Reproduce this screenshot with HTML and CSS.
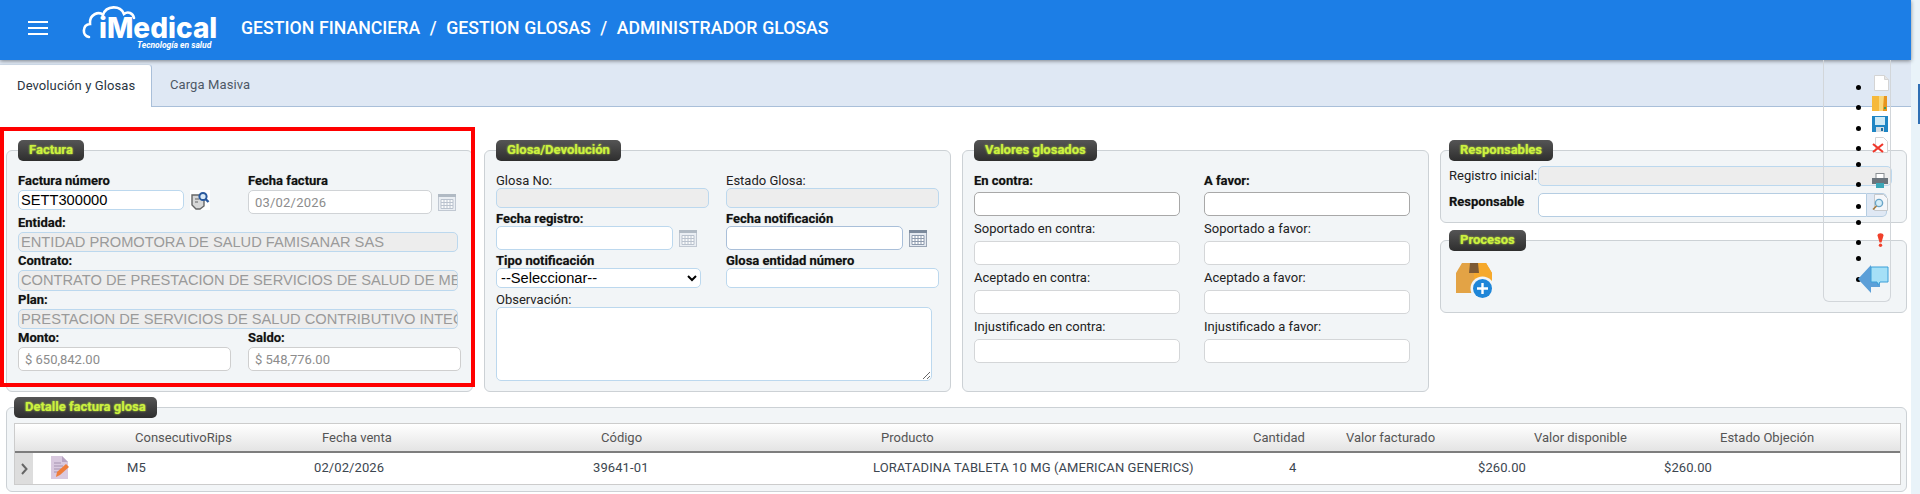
FILE: index.html
```html
<!DOCTYPE html>
<html lang="es">
<head>
<meta charset="utf-8">
<title>iMedical - Administrador Glosas</title>
<link rel="stylesheet" href="styles.css">
</head>
<body>
<svg class="defs" width="0" height="0" aria-hidden="true">
  <symbol id="cal" viewBox="0 0 18 17">
    <rect x="0.5" y="0.5" width="17" height="16" fill="#e4e9f0" stroke="#9aa5b5"/>
    <rect x="0" y="0" width="18" height="3" fill="#7c8a9c"/>
    <path d="M3 5.5h12v9H3zM3 8.5h12M3 11.5h12M6 5.5v9M9 5.5v9M12 5.5v9" fill="#fff" stroke="#8d9aad" stroke-width="1"/>
  </symbol>
</svg>
<div class="shell">
  <div class="main">
    <header class="topbar">
      <svg class="burger" width="20" height="14" viewBox="0 0 20 14"><path d="M0 1h20M0 7h20M0 13h20" stroke="#fff" stroke-width="2"/></svg>
      <svg class="logo" width="140" height="54" viewBox="0 0 140 54">
        <path d="M8 37C1 36 1 25 9 24C8 14 18 11 22 15C25 5 40 5 43 14C47 11 52 13 53 18" fill="none" stroke="#fff" stroke-width="2.6" stroke-linecap="round"/>
        <text x="18" y="38" class="logo-main">iMedical</text>
        <text x="56" y="48" class="logo-sub">Tecnología en salud</text>
      </svg>
      <h1 class="crumbs">GESTION FINANCIERA&nbsp; /&nbsp; GESTION GLOSAS&nbsp; /&nbsp; ADMINISTRADOR GLOSAS</h1>
    </header>
    <nav class="tabs">
      <a class="tab active">Devolución y Glosas</a>
      <a class="tab">Carga Masiva</a>
    </nav>
    <section class="columns">
      <div class="panel">
        <div class="legend">Factura</div>
        <div class="pair first">
          <div>
            <label class="lbl b">Factura número</label>
            <div class="with-icon">
              <div class="ctl num">SETT300000</div>
              <svg class="lookup" width="20" height="20" viewBox="0 0 20 20">
                <rect width="20" height="20" fill="#fff"/>
                <path d="M2 5h8l4 5v6l-4 3H6l-4-4z" fill="#d8d8d8" stroke="#666" stroke-width="1.4"/>
                <path d="M5 9h4M5 12h3" stroke="#666"/>
                <circle cx="13" cy="6.5" r="3.6" fill="#dcebf8" stroke="#2c5a9e" stroke-width="2"/>
                <path d="M15.5 9l3 3" stroke="#2c5a9e" stroke-width="2.4"/>
              </svg>
            </div>
          </div>
          <div>
            <label class="lbl b">Fecha factura</label>
            <div class="with-icon">
              <div class="ctl date muted">03/02/2026</div>
              <svg class="cal faded"><use href="#cal"/></svg>
            </div>
          </div>
        </div>
        <label class="lbl b">Entidad:</label>
        <div class="ctl ro wide h20">ENTIDAD PROMOTORA DE SALUD FAMISANAR SAS</div>
        <label class="lbl b">Contrato:</label>
        <div class="ctl ro wide h21">CONTRATO DE PRESTACION DE SERVICIOS DE SALUD DE MEDICAMENTOS</div>
        <label class="lbl b">Plan:</label>
        <div class="ctl ro wide h20">PRESTACION DE SERVICIOS DE SALUD CONTRIBUTIVO INTEGRAL</div>
        <div class="pair">
          <div>
            <label class="lbl b">Monto:</label>
            <div class="ctl money muted">$ 650,842.00</div>
          </div>
          <div>
            <label class="lbl b">Saldo:</label>
            <div class="ctl money muted">$ 548,776.00</div>
          </div>
        </div>
      </div>

      <div class="panel">
        <div class="legend">Glosa/Devolución</div>
        <div class="pair first-g">
          <div>
            <label class="lbl tight">Glosa No:</label>
            <input class="ctl ro box-213" disabled>
          </div>
          <div>
            <label class="lbl tight">Estado Glosa:</label>
            <input class="ctl ro box-213" disabled>
          </div>
        </div>
        <div class="pair gap">
          <div>
            <label class="lbl b tight">Fecha registro:</label>
            <div class="with-icon">
              <input class="ctl date2">
              <svg class="cal faded"><use href="#cal"/></svg>
            </div>
          </div>
          <div>
            <label class="lbl b tight">Fecha notificación</label>
            <div class="with-icon">
              <input class="ctl date2 strong">
              <svg class="cal"><use href="#cal"/></svg>
            </div>
          </div>
        </div>
        <div class="pair gap">
          <div>
            <label class="lbl b tight">Tipo notificación</label>
            <select class="ctl sel"><option>--Seleccionar--</option></select>
          </div>
          <div>
            <label class="lbl b tight">Glosa entidad número</label>
            <input class="ctl box-213">
          </div>
        </div>
        <label class="lbl tight obs">Observación:</label>
        <textarea class="ctl area"></textarea>
      </div>

      <div class="panel">
        <div class="legend">Valores glosados</div>
        <div class="values">
          <div><label class="lbl b v first-v">En contra:</label><input class="ctl val dark"></div>
          <div><label class="lbl b v first-v">A favor:</label><input class="ctl val dark"></div>
          <div><label class="lbl v">Soportado en contra:</label><input class="ctl val"></div>
          <div><label class="lbl v">Soportado a favor:</label><input class="ctl val"></div>
          <div><label class="lbl v">Aceptado en contra:</label><input class="ctl val"></div>
          <div><label class="lbl v">Aceptado a favor:</label><input class="ctl val"></div>
          <div><label class="lbl v">Injustificado en contra:</label><input class="ctl val"></div>
          <div><label class="lbl v">Injustificado a favor:</label><input class="ctl val"></div>
        </div>
      </div>

      <div class="stack">
        <div class="panel short">
          <div class="legend">Responsables</div>
          <div class="resp-row r1">
            <label class="lbl">Registro inicial:</label>
            <input class="ctl ro resp1" disabled>
          </div>
          <div class="resp-row r2">
            <label class="lbl b">Responsable</label>
            <input class="ctl resp2">
            <span class="addon"></span>
          </div>
        </div>
        <div class="panel short">
          <div class="legend">Procesos</div>
          <svg class="boxicon" width="37" height="37" viewBox="0 0 37 37">
            <path d="M0 11L6 1h24l6 10v20H0z" fill="#e3a345"/>
            <path d="M18 1h12l6 10v20H18z" fill="#f6a92c"/>
            <path d="M14 1h8l1 10H13z" fill="#7d5a34"/>
            <circle cx="26.5" cy="26.5" r="12" fill="#f2f5f7"/>
            <circle cx="26.5" cy="26.5" r="9.5" fill="#1f86d8"/>
            <path d="M26.5 21v11M21 26.5h11" stroke="#fff" stroke-width="2.4"/>
          </svg>
        </div>
      </div>
    </section>

    <section class="panel detail">
      <div class="legend">Detalle factura glosa</div>
      <div class="table">
        <div class="thead">
          <span class="first-h">ConsecutivoRips</span><span>Fecha venta</span><span>Código</span><span>Producto</span><span>Cantidad</span><span>Valor facturado</span><span>Valor disponible</span><span>Estado Objeción</span>
        </div>
        <div class="trow">
          <span class="exp"><svg width="7" height="12" viewBox="0 0 7 12"><path d="M1 1l4.5 5L1 11" fill="none" stroke="#666" stroke-width="2"/></svg></span>
          <span class="editcell">
            <svg width="18" height="23" viewBox="0 0 18 23">
              <path d="M0 0h11l6 6v17H0z" fill="#d9c9df"/>
              <path d="M11 0l6 6h-6z" fill="#b9a5c4"/>
              <path d="M3 7h7M3 10h9M3 13h7M3 16h5" stroke="#a593b0"/>
              <path d="M5 21l1-5 9-8 3 3-9 8z" fill="#ef7d3a"/>
            </svg>
          </span>
          <span>M5</span><span>02/02/2026</span><span>39641-01</span><span>LORATADINA TABLETA 10 MG (AMERICAN GENERICS)</span><span>4</span><span>$260.00</span><span>$260.00</span>
        </div>
      </div>
    </section>
  </div>
  <aside class="edge"><span class="edge-mark"></span></aside>

  <ul class="toolbar">
    <li><svg class="ti t1" width="15" height="16" viewBox="0 0 15 16"><path d="M.5.5h10l4 4v11H.5z" fill="#fff" stroke="#d4d4d4"/><path d="M10.5.5v4h4" fill="#e6e6e6" stroke="#d4d4d4"/></svg></li>
    <li><svg class="ti t2" width="15" height="15" viewBox="0 0 15 15"><rect width="15" height="15" fill="#f6b93b"/><path d="M7 0h5l-1 15H7z" fill="#f9d77b"/><path d="M12 0h3v15h-4z" fill="#e8951f"/><path d="M12 11h2v2h-2z" fill="#3f9b57"/></svg></li>
    <li class="bump"><svg class="ti t3" width="16" height="16" viewBox="0 0 16 16"><rect width="16" height="16" fill="#1f86c4"/><rect x="3" y="1" width="10" height="8" fill="#cfeaf5"/><rect x="4" y="11" width="8" height="5" fill="#d6dde2"/><rect x="9" y="12" width="2" height="3" fill="#1f6f9e"/></svg></li>
    <li><svg class="ti t4" width="16" height="16" viewBox="0 0 16 16"><path d="M3.5.5h8l4 4v11h-12z" fill="#fff" stroke="#d4d4d4"/><path d="M1 7l10 8M11 7L1 15" stroke="#f0362a" stroke-width="2.2"/></svg></li>
    <li class="short"></li>
    <li><svg class="ti t5" width="16" height="15" viewBox="0 0 16 15"><rect x="4" y="0.5" width="8" height="5" fill="#fff" stroke="#8a8f94"/><rect y="5" width="16" height="6" fill="#6b747c"/><rect x="4" y="10" width="8" height="5" fill="#3aa7b8"/></svg></li>
    <li class="tall2"><svg class="ti t6" width="16" height="17" viewBox="0 0 16 17"><path d="M2.5.5h9l4 4v12h-13z" fill="#f5f7fa" stroke="#c6c9cc"/><circle cx="7" cy="9" r="3.6" fill="#d4edf8" stroke="#6aa5c7" stroke-width="1.4"/><path d="M4.5 12L1 15.5" stroke="#a57b3c" stroke-width="1.6"/></svg></li>
    <li class="short"></li>
    <li><svg class="ti t7" width="7" height="14" viewBox="0 0 7 14"><path d="M.5 2.5C.5-.5 6.5-.5 6.5 2.5L4.5 9.5H2.5z" fill="#f0402b"/><circle cx="3.5" cy="12.2" r="1.7" fill="#f0402b"/></svg></li>
    <li class="short"></li>
    <li class="bump"><svg class="ti t8" width="31" height="28" viewBox="0 0 31 28"><path d="M0 14L13 0v6h9v16h-9v6z" fill="#5c9fd8"/><path d="M13 2h17v15h-8l-2 3-1-3h-6z" fill="#a5e0f7" stroke="#3a9fd8"/></svg></li>
  </ul>

  <div class="annotation"></div>
</div>
</body>
</html>
```
FILE: styles.css
```css
* { box-sizing: border-box; }
html, body { margin: 0; height: 494px; overflow: hidden; background: #fff; }
body { font-family: Roboto, "Liberation Sans", sans-serif; font-size: 13px; color: #111; }
.defs { position: absolute; }
.shell { position: relative; display: flex; height: 494px; }
.main { width: 1911px; flex: none; }
.edge { flex: 1; background: #e9f3f9; }
.edge-mark { display: block; width: 2px; height: 40px; margin: 84px 0 0 7px; background: #2f6fb4; }

.topbar { height: 60px; background: #1c7ee6; display: flex; align-items: flex-start; box-shadow: 0 1px 4px rgba(0, 0, 0, .45); position: relative; }
.burger { margin: 21px 0 0 28px; flex: none; }
.logo { margin: 0 0 0 33px; flex: none; }
.logo-main { font: 800 28px Inter, Roboto, sans-serif; fill: #fff; }
.logo-sub { font: italic 700 8.5px Roboto, sans-serif; fill: #fff; }
.crumbs { margin: 18px 0 0 20px; font: 500 17.7px/20px Roboto, sans-serif; word-spacing: .4px; color: #fff; white-space: nowrap; }

.tabs { height: 47px; background: #dfe8f4; border-bottom: 1px solid #a9bfd9; display: flex; padding-top: 4px; }
.tab { height: 43px; line-height: 42px; padding: 0 18px; color: #4d5866; letter-spacing: .1px; white-space: nowrap; }
.tab.active { width: 152px; padding: 0 0 0 17px; color: #2a3542; background: #fff; border: 1px solid #a9bfd9; border-width: 1px 1px 0 0; border-top-color: #cfdbe9; border-top-right-radius: 4px; margin-bottom: -1px; }

.columns { display: grid; grid-template-columns: repeat(4, 467px); gap: 11px; margin: 43px 4px 0 6px; height: 242px; }
.stack { display: flex; flex-direction: column; gap: 17px; }
.panel { background: #f2f5f7; border: 1px solid #ccd1d5; border-radius: 6px; padding: 0 0 0 11px; }
.panel.short { height: 73px; }
.short .legend { margin-left: -3px; }
.legend { width: fit-content; height: 21px; margin: -11px 0 0 0; padding: 0 11px; border-radius: 5px; background: linear-gradient(#555, #2e2e2e); color: #cbf23f; font-weight: 700; font-size: 13px; line-height: 20px; text-shadow: 0 0 2px #cbf23f; }

.lbl { display: block; height: 16px; line-height: 16px; white-space: nowrap; color: #222; }
.lbl.b { font-weight: 700; color: #111; text-shadow: 0 0 1px rgba(0, 0, 0, .35); }
.ctl { display: block; border: 1px solid #bcd8ee; border-radius: 5px; background: #fff; margin: 1px 0 0; padding: 0 2px; font-family: "Liberation Sans", sans-serif; outline: none; white-space: nowrap; overflow: hidden; }
.ro { background: #ededed; color: #9a9a9a; }
.pair { display: grid; grid-template-columns: 230px 230px; }
.pair.first { padding-top: 12px; margin-bottom: 1px; }
.with-icon { display: flex; align-items: flex-start; }
.lookup { margin: 1px 0 0 6px; flex: none; }
.cal { width: 18px; height: 17px; margin: 5px 0 0 6px; flex: none; }
.with-icon .date2 + .cal { margin-top: 4px; }
.cal.faded { opacity: .55; }

.num { width: 166px; height: 20px; font-size: 14.667px; line-height: 18px; color: #000; }
.date { width: 184px; height: 24px; line-height: 23px; font-family: Roboto, sans-serif; font-size: 13px; padding-left: 6px; letter-spacing: .2px; border-color: #d0d3d6; }
.muted { color: #8c8c8c; }
.wide { width: 440px; font-size: 14.667px; margin-bottom: 1px; }
.h20 { height: 20px; line-height: 18px; }
.h21 { height: 21px; line-height: 19px; }
.money { width: 213px; height: 24px; line-height: 23px; font-family: Roboto, sans-serif; font-size: 13px; padding-left: 6px; border-color: #cfcfcf; }

.first-g { padding-top: 12px; }
.lbl.tight { margin-bottom: -1px; }
.lbl.tight + .ctl, .lbl.tight + .with-icon .ctl { margin-top: 0; }
.box-213 { width: 213px; height: 20px; }
.date2 { width: 177px; height: 24px; }
.date2.strong { border-color: #a9bfd9; }
.gap { margin-top: 3px; }
.sel { width: 205px; height: 20px; font-size: 14.667px; color: #000; padding: 0; }
.obs { margin-top: 4px; }
.area { width: 436px; height: 74px; white-space: normal; overflow: auto; }

.values { display: grid; grid-template-columns: 230px 230px; padding-top: 12px; row-gap: 5px; }
.lbl.v { height: 20px; }
.lbl.first-v { height: 19px; }
.val { width: 206px; height: 24px; margin-top: 0; border-color: #d4d6d8; }
.val.dark { border-color: #a8a8a8; }

.resp-row { display: flex; align-items: flex-start; margin-left: -3px; }
.resp-row .lbl { width: 89px; flex: none; }
.r1 { margin-top: 4px; }
.r1 .lbl { padding-top: 2px; height: 20px; line-height: 16px; margin-top: 1px; }
.resp1 { width: 354px; height: 20px; margin-top: 1px; }
.r2 { margin-top: 7px; }
.r2 .lbl { padding-top: 1px; height: 20px; }
.resp2 { width: 329px; height: 24px; margin-top: 0; border-color: #b5cde2; border-radius: 5px 0 0 5px; }
.addon { width: 20px; height: 24px; background: #dfe8f4; border: 1px solid #b5cde2; border-left: 0; border-radius: 0 5px 5px 0; }
.boxicon { display: block; margin: 11px 0 0 4px; }

.detail { height: 85px; margin: 15px 4px 0 6px; padding: 0 5px 0 7px; }
.detail .legend { margin-left: 0; }
.table { margin-top: 5px; border: 1px solid #ccc; background: #fff; height: 62px; }
.thead, .trow { display: grid; white-space: nowrap; align-items: center; }
.thead { height: 29px; grid-template-columns: 307px 279px 280px 372px 93px 188px 186px 1fr; background: linear-gradient(#fff, #e4e4e4); border-bottom: 2px solid #7d7d7d; color: #555; }
.first-h { margin-left: 120px; }
.trow { height: 31px; padding-bottom: 2px; grid-template-columns: 18px 94px 187px 279px 280px 416px 189px 186px 1fr; color: #3c4650; letter-spacing: .1px; }
.exp { height: 31px; margin-bottom: -2px; background: #ddd; display: flex; align-items: center; justify-content: center; }
.editcell { display: flex; padding-left: 18px; }

.toolbar { position: absolute; left: 1823px; top: 60px; width: 68px; height: 242px; margin: 0; padding: 16px 0 0 49px; border: 1px solid #d2d6da; border-top: 0; border-radius: 0 0 6px 6px; font-size: 16px; line-height: 16px; color: #000; }
.toolbar li { position: relative; height: 20px; padding-top: 4px; }
.toolbar li.short { height: 16px; padding-top: 0; }
.toolbar li.tall2 { height: 22px; padding-top: 6px; }
.toolbar li.bump { margin-top: 1px; }
.ti { position: absolute; }
.t1 { left: 1px; top: -1px; }
.t2 { left: -1px; top: 0; }
.t3 { left: -1px; top: -1px; }
.t4 { left: -1px; top: 0; }
.t5 { left: -1px; top: 0; }
.t6 { left: -1px; top: 1px; }
.t7 { left: 4px; top: 2px; }
.t8 { left: -15px; top: -3px; }

.annotation { position: absolute; left: 0; top: 127px; width: 475px; height: 260px; border: 4px solid #f00; pointer-events: none; }
```
